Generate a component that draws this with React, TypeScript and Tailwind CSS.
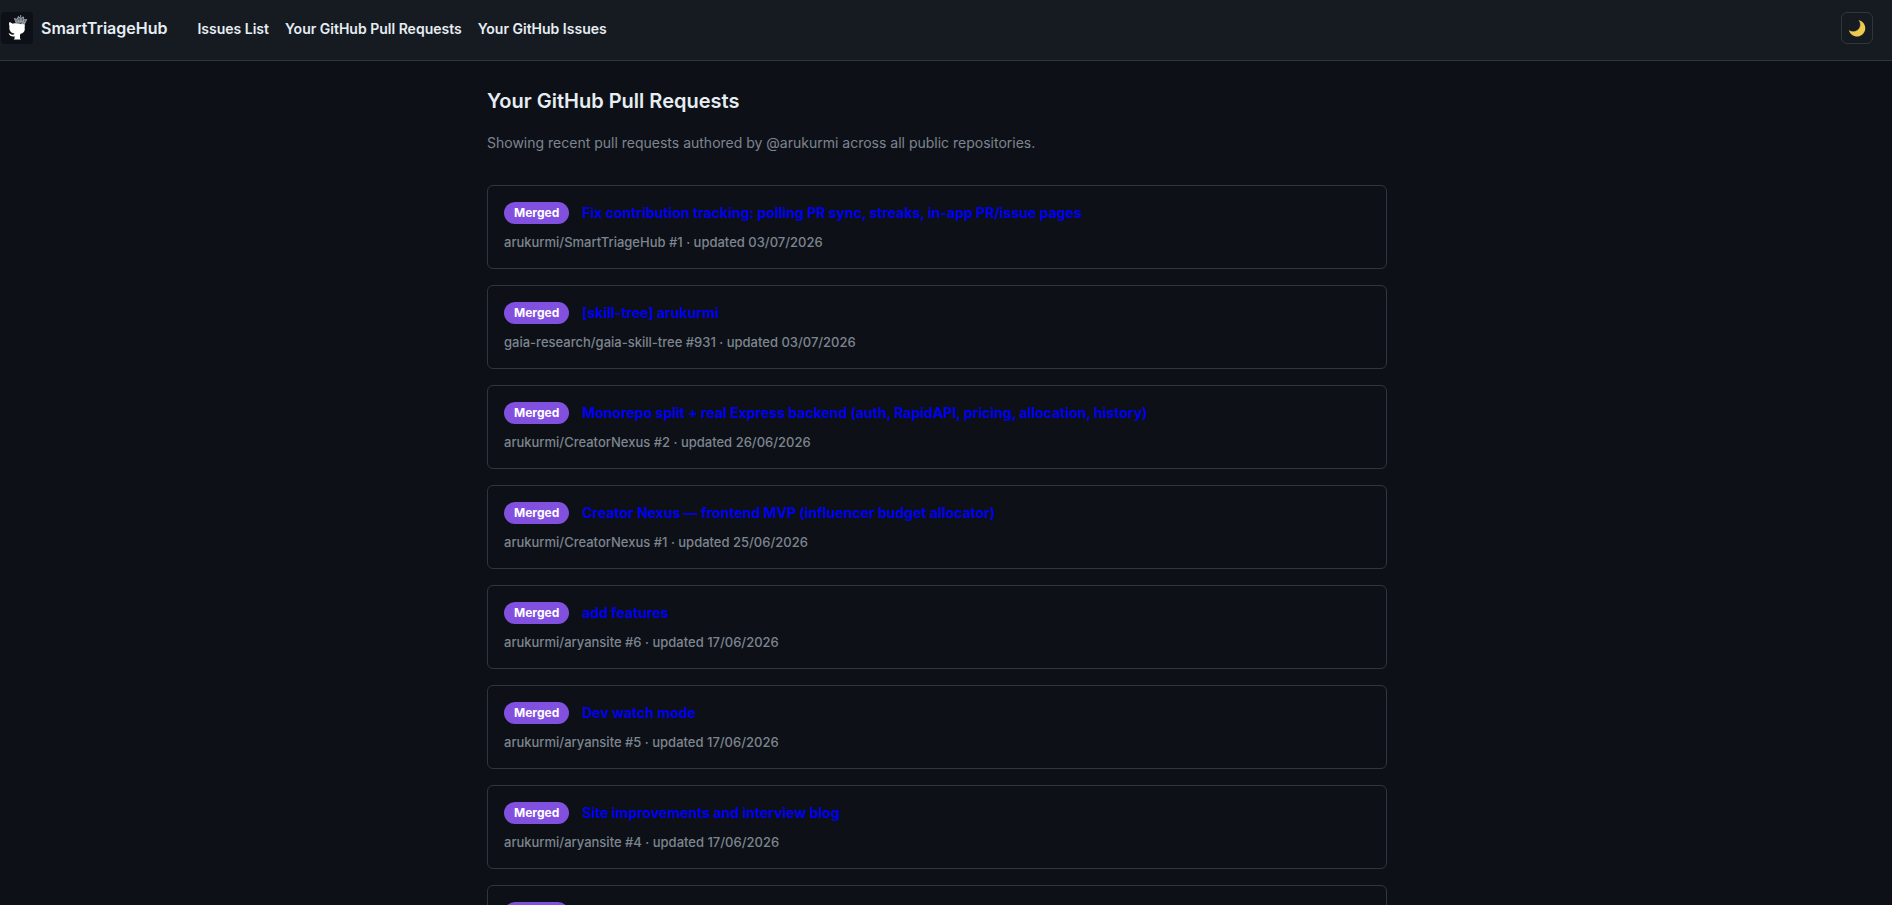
type PullRequest = { title: string; repo: string; number: number; updated: string };

const pullRequests: PullRequest[] = [
  { title: "Fix contribution tracking: polling PR sync, streaks, in-app PR/issue pages", repo: "arukurmi/SmartTriageHub", number: 1, updated: "03/07/2026" },
  { title: "[skill-tree] arukurmi", repo: "gaia-research/gaia-skill-tree", number: 931, updated: "03/07/2026" },
  { title: "Monorepo split + real Express backend (auth, RapidAPI, pricing, allocation, history)", repo: "arukurmi/CreatorNexus", number: 2, updated: "26/06/2026" },
  { title: "Creator Nexus — frontend MVP (influencer budget allocator)", repo: "arukurmi/CreatorNexus", number: 1, updated: "25/06/2026" },
  { title: "add features", repo: "arukurmi/aryansite", number: 6, updated: "17/06/2026" },
  { title: "Dev watch mode", repo: "arukurmi/aryansite", number: 5, updated: "17/06/2026" },
  { title: "Site improvements and interview blog", repo: "arukurmi/aryansite", number: 4, updated: "17/06/2026" },
];

const navItems = ["Issues List", "Your GitHub Pull Requests", "Your GitHub Issues"];

function Logo() {
  return (
    <svg className="size-8 shrink-0" viewBox="0 0 32 32" aria-hidden="true">
      <rect width="32" height="32" rx="4" fill="#0d1117" />
      <path
        d="M8.3 10.2 C9.5 10.2 10.8 10.9 11.7 11.7 C14 11.1 17.8 11.3 20 12.3 C21 11.6 22.4 11.4 23.4 11.8 C24 13 24 14.3 23.6 15.2 C24.4 18.3 23 21.2 19.5 21.8 L19 23 V26.4 L20 27.4 H12.6 L13.6 26.4 V24.2 C11.2 24.8 9.2 24 8.3 22.4 L7.6 21.2 C9.4 21.2 10 22.8 11.6 22.7 C12.5 22.7 13.2 22.4 13.6 21.7 C9.4 20.8 7.7 17.8 8.5 14.2 C8 13 7.9 11.4 8.3 10.2Z"
        fill="#fff"
      />
      <g fill="none" stroke="#a9afb6" strokeWidth="0.9" strokeLinejoin="round">
        <path d="M15.2 11 L13.5 6.5 L16.2 7.4 L17.4 4.4 L19.7 6.9 L22.2 4.8 L23 8 L25.7 7.5 L23.3 12.2 Q19.5 10.2 15.2 11Z" fill="#59606a" />
        <path d="M15 9.2 Q20 8.2 24 10.6 M17 7.5 L18 10 M20 7 V10 M22.6 8 L21.7 10.7" />
        <path d="M19.7 3 V6" />
      </g>
    </svg>
  );
}

function MoonIcon() {
  return (
    <svg className="size-[18px]" viewBox="0 0 18 18" aria-hidden="true">
      <path d="M11 1.2 A8.3 8.3 0 1 1 1 11.6 C4.2 13.4 7.8 13 10.3 10.6 C12.8 8.2 13.2 4.4 11 1.2Z" fill="#eecb4e" />
      <path d="M11 1.2 C13.2 4.4 12.8 8.2 10.3 10.6 C7.8 13 4.2 13.4 1 11.6" fill="none" stroke="#c9b267" strokeWidth="0.6" />
    </svg>
  );
}

function MergedBadge() {
  return <span className="rounded-full bg-[#8250df] px-2.5 text-xs leading-[22px] font-bold text-white">Merged</span>;
}

function PullRequestCard({ pr }: { pr: PullRequest }) {
  return (
    <li className="rounded-md border border-[#30363d] px-4 py-4">
      <div className="flex h-[22px] items-center gap-[13px]">
        <MergedBadge />
        <a href="#" className="truncate text-sm font-bold text-[#0000ee]">
          {pr.title}
        </a>
      </div>
      <p className="mt-2 truncate text-[13px] leading-5 font-medium text-[#7d8590]">
        {pr.repo} #{pr.number} · updated {pr.updated}
      </p>
    </li>
  );
}

export default function App() {
  return (
    <div className="h-screen overflow-hidden bg-[#0d1117] font-['Inter','Liberation_Sans',sans-serif] text-[#e6edf3]">
      <header className="flex items-start border-b border-[#30363d] bg-[#161b22] pt-3 pr-[19px] pb-[14px] pl-px">
        <a href="#" className="flex items-center gap-2 text-base font-semibold">
          <Logo />
          <span className="leading-8">SmartTriageHub</span>
        </a>
        <nav className="ml-[30px] flex gap-4">
          {navItems.map((item) => (
            <a key={item} href="#" className="text-sm leading-[34px] font-semibold">
              {item}
            </a>
          ))}
        </nav>
        <button type="button" aria-label="Toggle theme" className="ml-auto flex size-8 items-center justify-center rounded-md border border-[#30363d]">
          <MoonIcon />
        </button>
      </header>
      <main className="pr-[18px]">
        <div className="mx-auto max-w-[900px] pt-6">
          <h1 className="text-xl leading-8 font-semibold">Your GitHub Pull Requests</h1>
          <p className="mt-4 text-sm leading-5 text-[#7d8590]">
            Showing recent pull requests authored by @arukurmi across all public repositories.
          </p>
          <ul className="mt-8 flex flex-col gap-4">
            {pullRequests.map((pr) => (
              <PullRequestCard key={`${pr.repo}#${pr.number}`} pr={pr} />
            ))}
            <li className="flex h-[84px] items-start rounded-md border border-[#30363d] px-4 pt-4">
              <MergedBadge />
            </li>
          </ul>
        </div>
      </main>
    </div>
  );
}
